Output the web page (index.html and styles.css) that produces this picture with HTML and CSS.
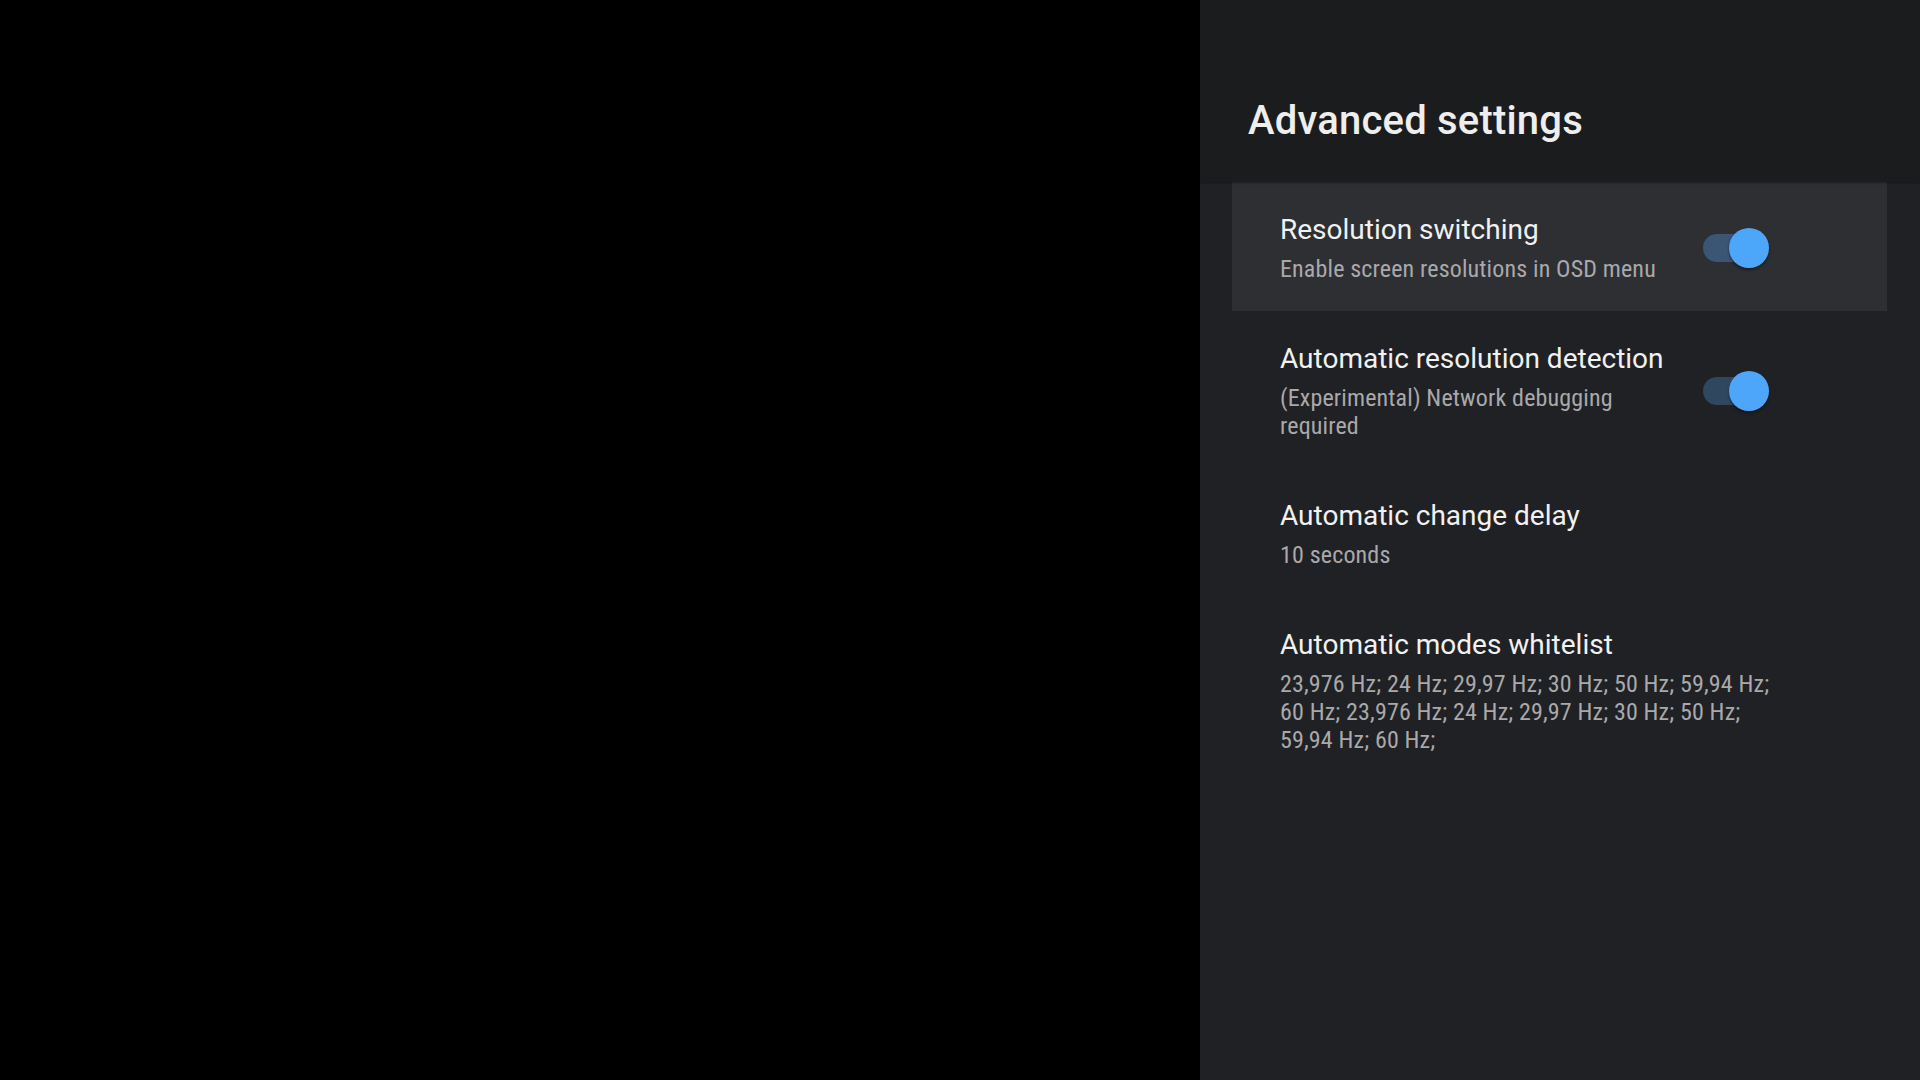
FILE: index.html
```html
<!DOCTYPE html>
<html lang="en">
<head>
  <meta charset="UTF-8" />
  <meta name="viewport" content="width=device-width, initial-scale=1" />
  <title>Advanced settings</title>
  <link rel="stylesheet" href="styles.css">
</head>
<body>
  <div class="screen">
    <div class="video-area"></div>

    <aside class="settings-panel">
      <header class="panel-header">
        <h1>Advanced settings</h1>
      </header>

      <ul class="pref-list">
        <li class="pref-item focused">
          <div class="pref-text">
            <div class="pref-title">Resolution switching</div>
            <div class="pref-summary">Enable screen resolutions in OSD menu</div>
          </div>
          <div class="switch on"><span class="track"></span><span class="thumb"></span></div>
        </li>
        <li class="pref-item">
          <div class="pref-text">
            <div class="pref-title">Automatic resolution detection</div>
            <div class="pref-summary">(Experimental) Network debugging required</div>
          </div>
          <div class="switch on"><span class="track"></span><span class="thumb"></span></div>
        </li>
        <li class="pref-item">
          <div class="pref-text">
            <div class="pref-title">Automatic change delay</div>
            <div class="pref-summary">10 seconds</div>
          </div>
        </li>
        <li class="pref-item">
          <div class="pref-text">
            <div class="pref-title">Automatic modes whitelist</div>
            <div class="pref-summary">23,976&nbsp;Hz; 24&nbsp;Hz; 29,97&nbsp;Hz; 30&nbsp;Hz; 50&nbsp;Hz; 59,94&nbsp;Hz; 60&nbsp;Hz; 23,976&nbsp;Hz; 24&nbsp;Hz; 29,97&nbsp;Hz; 30&nbsp;Hz; 50&nbsp;Hz; 59,94&nbsp;Hz; 60&nbsp;Hz;</div>
          </div>
        </li>
      </ul>
    </aside>
  </div>
</body>
</html>
```

FILE: styles.css
```css
html, body {
  margin: 0;
  padding: 0;
  height: 100%;
  background: #000;
  font-family: Roboto, "Noto Sans", sans-serif;
}
.screen {
  display: flex;
  height: 100vh;
  overflow: hidden;
}
.video-area {
  flex: 1;
  background: #000;
}
.settings-panel {
  width: 720px;
  background: #202124; /* list background */
  display: flex;
  flex-direction: column;
}
.panel-header {
  height: 182px;
  box-sizing: border-box;
  padding: 97px 0 0 48px;
  background: #1b1c1e;
  box-shadow: 0 1px 2px rgba(0, 0, 0, 0.35);
  position: relative;
  z-index: 1;
}
.panel-header h1 {
  margin: 0;
  font-size: 40px;
  line-height: 48px;
  font-weight: 500;
  color: #eeeeee;
  letter-spacing: 0.2px;
}
.pref-list {
  list-style: none;
  margin: 0;
  padding: 0;
}
.pref-item {
  display: flex;
  align-items: center;
  margin: 0 33px 0 32px;
  padding: 30px 97px 28px 48px;
}
.pref-item.focused {
  background: #2e2f33;
}
.pref-text {
  flex: 1;
  min-width: 0;
}
.pref-title {
  font-size: 28px;
  line-height: 36px;
  color: #f1f1f1;
}
.pref-summary {
  margin-top: 7px;
  font-family: "Roboto Condensed", "Liberation Sans Narrow", "DejaVu Sans Condensed", Roboto, sans-serif;
  font-stretch: condensed;
  font-size: 24px;
  line-height: 28px;
  letter-spacing: 0.15px;
  color: #a9a9ab;
}
.switch {
  position: relative;
  flex: none;
  width: 66px;
  height: 40px;
  margin: 0 21px 0 32px;
}
.switch .track {
  position: absolute;
  left: 0;
  right: 8px;
  top: 6px;
  height: 28px;
  border-radius: 14px;
  background: #30485f;
}
.pref-item.focused .switch .track {
  background: #3a5674;
}
.switch .thumb {
  position: absolute;
  right: 0;
  top: 0;
  width: 40px;
  height: 40px;
  border-radius: 50%;
  background: #4ea6fa;
  box-shadow: 0 2px 3px rgba(0, 0, 0, 0.4);
}
```
